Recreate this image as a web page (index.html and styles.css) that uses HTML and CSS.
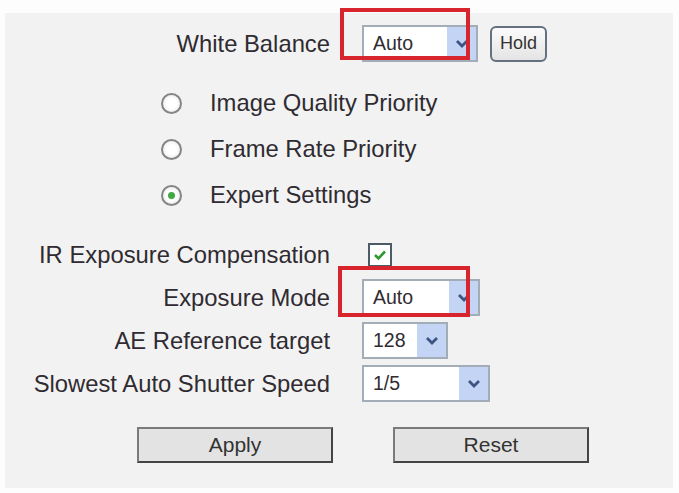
FILE: index.html
```html
<!DOCTYPE html>
<html>
<head>
    <title>Camera Settings</title>
    <link rel="stylesheet" href="styles.css">
</head>
<body>

<div class="panel">
    <div class="row">
        <span class="label">White Balance</span>
        <div class="ctrl">
            <div class="select wb">
                <span class="value">Auto</span>
                <span class="arrow"><svg width="14" height="9" viewBox="0 0 14 9"><polyline points="2,2 7,7 12,2" fill="none" stroke="#3d5482" stroke-width="2.8"/></svg></span>
            </div>
            <button class="hold">Hold</button>
        </div>
    </div>

    <div class="radios">
        <div class="radio-row"><span class="radio"></span><span>Image Quality Priority</span></div>
        <div class="radio-row"><span class="radio"></span><span>Frame Rate Priority</span></div>
        <div class="radio-row"><span class="radio checked"></span><span>Expert Settings</span></div>
    </div>

    <div class="expert">
        <div class="row">
            <span class="label">IR Exposure Compensation</span>
            <div class="ctrl">
                <span class="checkbox"><svg width="14" height="12" viewBox="0 0 14 12"><polyline points="2,6 5.5,9.5 12,2.5" fill="none" stroke="#2e9a2e" stroke-width="2.6"/></svg></span>
            </div>
        </div>
        <div class="row">
            <span class="label">Exposure Mode</span>
            <div class="ctrl">
                <div class="select em">
                    <span class="value">Auto</span>
                    <span class="arrow"><svg width="14" height="9" viewBox="0 0 14 9"><polyline points="2,2 7,7 12,2" fill="none" stroke="#3d5482" stroke-width="2.8"/></svg></span>
                </div>
            </div>
        </div>
        <div class="row">
            <span class="label">AE Reference target</span>
            <div class="ctrl">
                <div class="select ae">
                    <span class="value">128</span>
                    <span class="arrow"><svg width="14" height="9" viewBox="0 0 14 9"><polyline points="2,2 7,7 12,2" fill="none" stroke="#3d5482" stroke-width="2.8"/></svg></span>
                </div>
            </div>
        </div>
        <div class="row">
            <span class="label">Slowest Auto Shutter Speed</span>
            <div class="ctrl">
                <div class="select ss">
                    <span class="value">1/5</span>
                    <span class="arrow"><svg width="14" height="9" viewBox="0 0 14 9"><polyline points="2,2 7,7 12,2" fill="none" stroke="#3d5482" stroke-width="2.8"/></svg></span>
                </div>
            </div>
        </div>
    </div>

    <div class="actions">
        <button class="btn">Apply</button>
        <button class="btn">Reset</button>
    </div>

    <div class="mark mark-wb"></div>
    <div class="mark mark-em"></div>
</div>

</body>
</html>
```
FILE: styles.css
```css
body {
    margin: 0;
    background: #fdfdfd;
    font-family: "Liberation Sans", Arial, sans-serif;
    color: #2f2b31;
}

.panel {
    position: relative;
    margin: 13px 6px 0 5px;
    height: 475px;
    padding-top: 12px;
    box-sizing: border-box;
    background: #f2f2f2;
    font-size: 23.8px;
}

.row {
    display: flex;
    align-items: center;
    height: 37px;
}

.label {
    width: 325px;
    text-align: right;
    flex-shrink: 0;
    white-space: nowrap;
}

.ctrl {
    margin-left: 32px;
    display: flex;
    align-items: center;
}

.select {
    display: flex;
    height: 37px;
    box-sizing: border-box;
    border: 2px solid #a3adb8;
    background: #fff;
    font-size: 19.5px;
}

.select .value {
    flex: 1;
    padding-left: 9px;
    display: flex;
    align-items: center;
}

.select .arrow {
    width: 29px;
    background: #c4d4f4;
    display: flex;
    align-items: center;
    justify-content: center;
}

.wb { width: 116px; }
.em { width: 118px; }
.ae { width: 86px; }
.ss { width: 128px; }

.hold {
    margin-left: 12px;
    width: 57px;
    height: 36px;
    border: 2px solid #64717e;
    border-radius: 6px;
    background: linear-gradient(#fbfbfb, #e4e4e4);
    font-family: "Liberation Sans", Arial, sans-serif;
    font-size: 18px;
    color: #333;
    padding: 0;
}

.radios {
    margin-top: 18px;
    padding-left: 156px;
}

.radio-row {
    display: flex;
    align-items: center;
    height: 46px;
}

.radio {
    width: 21px;
    height: 21px;
    box-sizing: border-box;
    border: 2px solid #858585;
    border-radius: 50%;
    background: radial-gradient(#ffffff 40%, #e2e2e2);
    margin-right: 28px;
    display: flex;
    align-items: center;
    justify-content: center;
}

.radio.checked::after {
    content: "";
    width: 7px;
    height: 7px;
    border-radius: 50%;
    background: #3faa3f;
}

.expert {
    margin-top: 18px;
}

.expert .row + .row {
    margin-top: 6px;
}

.checkbox {
    margin-left: 6px;
    width: 24px;
    height: 24px;
    box-sizing: border-box;
    border: 2px solid #4c5b6a;
    background: #fff;
    display: flex;
    align-items: center;
    justify-content: center;
}

.actions {
    margin-top: 25px;
    padding-left: 132px;
    display: flex;
    gap: 60px;
}

.btn {
    width: 196px;
    height: 36px;
    border: 2px solid #7a7a7a;
    border-right-color: #444;
    border-bottom-color: #444;
    background: #e3e3e3;
    font-family: "Liberation Sans", Arial, sans-serif;
    font-size: 21px;
    color: #333;
    padding: 0;
}

.mark {
    position: absolute;
    border: 4px solid #d8242c;
    box-sizing: border-box;
}

.mark-wb {
    left: 335px;
    top: -5px;
    width: 130px;
    height: 52px;
}

.mark-em {
    left: 333px;
    top: 253px;
    width: 132px;
    height: 51px;
}
```
